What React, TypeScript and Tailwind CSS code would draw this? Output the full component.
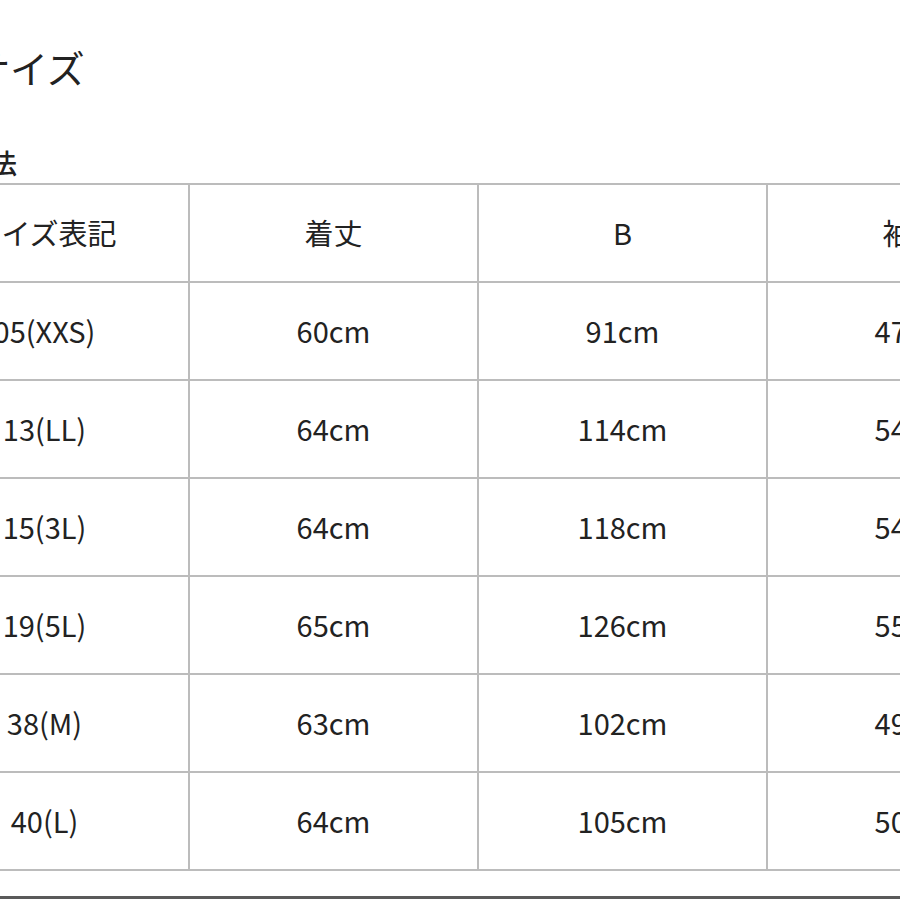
import React from 'react'

const rows = [
  ['05(XXS)', '60cm', '91cm', '47cm'],
  ['13(LL)', '64cm', '114cm', '54cm'],
  ['15(3L)', '64cm', '118cm', '54cm'],
  ['19(5L)', '65cm', '126cm', '55cm'],
  ['38(M)', '63cm', '102cm', '49cm'],
  ['40(L)', '64cm', '105cm', '50cm'],
]

const headers = ['サイズ表記', '着丈', 'B', '袖丈']

export default function App() {
  return (
    <div
      className="w-[900px] h-[900px] overflow-hidden bg-white text-[#222] flex flex-col relative"
      style={{ fontFamily: '"Noto Sans CJK JP", "Noto Sans", sans-serif' }}
    >
      <h1 className="ml-[-28px] mt-[42px] text-[38px] leading-[50px] font-normal whitespace-nowrap">サイズ</h1>
      <h2 className="ml-[-37px] mt-[55px] text-[27px] leading-[32px] font-medium whitespace-nowrap">寸法</h2>
      <table className="ml-[-101px] mt-[4px] w-[1158px] min-w-[1158px] table-fixed border-collapse text-[29px]">
        <thead>
          <tr>
            {headers.map((h) => (
              <th key={h} className="h-[98px] border-2 border-[#bcbcbc] font-normal text-center align-middle whitespace-nowrap">
                {h}
              </th>
            ))}
          </tr>
        </thead>
        <tbody>
          {rows.map((r) => (
            <tr key={r[0]}>
              {r.map((c, i) => (
                <td key={i} className="h-[98px] border-2 border-[#bcbcbc] text-center align-middle whitespace-nowrap">
                  {c}
                </td>
              ))}
            </tr>
          ))}
        </tbody>
      </table>
      <div className="absolute left-0 right-0 bottom-[1px] h-[3px] bg-[#5a5a5a]" />
    </div>
  )
}
